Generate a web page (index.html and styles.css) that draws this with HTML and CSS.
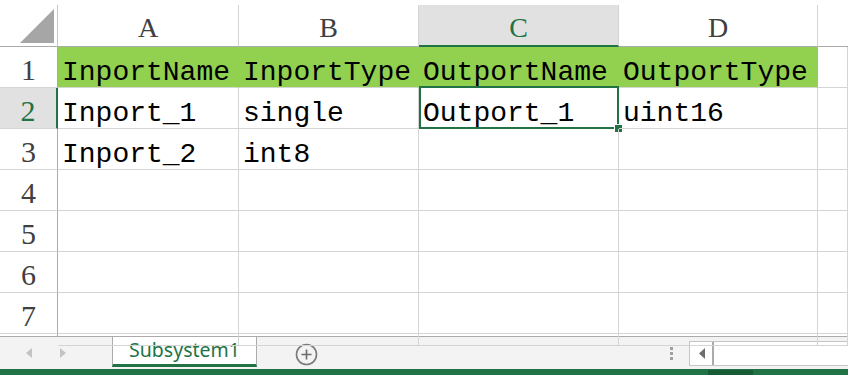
FILE: index.html
```html
<!DOCTYPE html>
<html>
<head>
<meta charset="utf-8">
<link rel="stylesheet" href="styles.css">
</head>
<body>
<div class="app">
  <div class="grid">
    <div class="corner"><svg width="57" height="41" viewBox="0 0 57 41"><polygon points="54,4 54,38 20,38" fill="#a6a6a6"/></svg></div>
    <div class="ch">A</div>
    <div class="ch">B</div>
    <div class="ch ch-sel">C</div>
    <div class="ch">D</div>
    <div class="ch ch-last"></div>

    <div class="rh">1</div>
    <div class="c fill">InportName</div>
    <div class="c fill">InportType</div>
    <div class="c fill">OutportName</div>
    <div class="c fill">OutportType</div>
    <div class="c"></div>

    <div class="rh rh-sel">2</div>
    <div class="c">Inport_1</div>
    <div class="c">single</div>
    <div class="c active">Outport_1<span class="selbox"><span class="handle"></span></span></div>
    <div class="c">uint16</div>
    <div class="c"></div>

    <div class="rh">3</div>
    <div class="c">Inport_2</div>
    <div class="c">int8</div>
    <div class="c"></div>
    <div class="c"></div>
    <div class="c"></div>

    <div class="rh">4</div>
    <div class="c"></div><div class="c"></div><div class="c"></div><div class="c"></div><div class="c"></div>

    <div class="rh">5</div>
    <div class="c"></div><div class="c"></div><div class="c"></div><div class="c"></div><div class="c"></div>

    <div class="rh">6</div>
    <div class="c"></div><div class="c"></div><div class="c"></div><div class="c"></div><div class="c"></div>

    <div class="rh">7</div>
    <div class="c"></div><div class="c"></div><div class="c"></div><div class="c"></div><div class="c"></div>

    <div class="rh rh-part"></div>
    <div class="c c-part"></div><div class="c c-part"></div><div class="c c-part"></div><div class="c c-part"></div><div class="c c-part"></div>
  </div>

  <div class="tabbar">
    <div class="nav">
      <svg class="navarrow" width="6" height="10" viewBox="0 0 6 10"><polygon points="6,0 6,10 0,5" fill="#c3c3c3"/></svg>
      <svg class="navarrow" width="6" height="10" viewBox="0 0 6 10"><polygon points="0,0 0,10 6,5" fill="#c3c3c3"/></svg>
    </div>
    <div class="tab">Subsystem1</div>
    <svg class="add" width="23" height="23" viewBox="0 0 23 23"><circle cx="11.5" cy="11.5" r="10" fill="none" stroke="#7a7a7a" stroke-width="1.6"/><path d="M6.5 11.5h10M11.5 6.5v10" stroke="#6a6a6a" stroke-width="1.6"/></svg>
    <div class="dots"><span></span><span></span><span></span></div>
    <div class="hscroll">
      <div class="sbtn"><svg width="6" height="11" viewBox="0 0 6 11"><polygon points="6,0 6,11 0,5.5" fill="#6e6e6e"/></svg></div>
      <div class="strack"></div>
    </div>
  </div>

  <div class="status"><div class="status-seg"></div></div>
</div>
</body>
</html>
```

FILE: styles.css
```css
* { box-sizing: border-box; }
html, body { margin: 0; padding: 0; background: #fff; }
body { width: 848px; height: 375px; overflow: hidden; }

.app { width: 848px; height: 375px; display: flex; flex-direction: column; overflow: hidden; }

.grid {
  display: grid;
  grid-template-columns: 58px 181px 180px 200px 199px 1fr;
  grid-template-rows: 42px repeat(7, 41px) 2px;
  padding-top: 5px;
  flex: none;
}

.corner {
  border-right: 1px solid #c8c8c8;
  border-bottom: 1px solid #ababab;
}
.corner svg { display: block; }

.ch {
  border-right: 1px solid #d4d4d4;
  border-bottom: 1px solid #ababab;
  font-family: "Liberation Serif", serif;
  font-size: 28px;
  color: #404040;
  text-align: center;
  line-height: 29px;
  padding-top: 8px;
}
.ch-last { border-right: none; }
.ch-sel {
  background: #e1e1e1;
  color: #217346;
  border-bottom: 2px solid #217346;
}

.rh {
  border-right: 1px solid #ababab;
  border-bottom: 1px solid #d4d4d4;
  font-family: "Liberation Serif", serif;
  font-size: 30px;
  color: #404040;
  text-align: center;
  line-height: 29px;
  padding-top: 8px;
}
.rh-sel {
  background: #e1e1e1;
  color: #217346;
  border-right: 2px solid #217346;
}
.rh-part, .c-part { border-bottom: none; padding: 0; }

.c {
  position: relative;
  border-right: 1px solid #d4d4d4;
  border-bottom: 1px solid #d4d4d4;
  font-family: "Liberation Mono", monospace;
  font-size: 28px;
  color: #000;
  line-height: 29px;
  padding: 11px 0 0 4px;
  white-space: nowrap;
}
.fill {
  background: #92d050;
  border-right-color: #92d050;
}

.selbox {
  position: absolute;
  left: 0;
  top: -2px;
  right: -1px;
  bottom: -1px;
  border: 2px solid #217346;
  pointer-events: none;
}
.handle {
  position: absolute;
  right: -5px;
  bottom: -5px;
  width: 7px;
  height: 7px;
  background: #217346;
  box-shadow: 0 0 0 1px #fff;
}

.tabbar {
  flex: none;
  height: 33px;
  background: #f3f3f3;
  border-top: 1px solid #ababab;
  display: flex;
  align-items: flex-start;
}
.nav {
  width: 112px;
  flex: none;
  display: flex;
  align-items: center;
  gap: 28px;
  padding: 11px 0 0 26px;
}
.navarrow { display: block; }

.tab {
  flex: none;
  width: 145px;
  height: 30px;
  background: #fff;
  border-left: 1px solid #ababab;
  border-right: 1px solid #ababab;
  border-bottom: 3px solid #217346;
  font-family: "Noto Sans", sans-serif;
  font-size: 19.5px;
  line-height: 26px;
  color: #217346;
  text-align: center;
}

.add {
  display: block;
  flex: none;
  margin: 6px 0 0 38px;
}

.dots {
  margin-left: auto;
  margin-right: 16px;
  margin-top: 10px;
  display: flex;
  flex-direction: column;
  gap: 2px;
}
.dots span { display: block; width: 3px; height: 3px; background: #a0a0a0; }

.hscroll {
  flex: none;
  width: 159px;
  height: 25px;
  margin-top: 4px;
  display: flex;
  border-top: 1px solid #c6c6c6;
  border-bottom: 1px solid #c6c6c6;
  border-left: 1px solid #c6c6c6;
  background: #fff;
}
.sbtn {
  width: 24px;
  flex: none;
  display: flex;
  align-items: center;
  justify-content: center;
  border-right: 2px solid #ababab;
  background: #fff;
}
.sbtn svg { display: block; margin-left: 1px; }
.strack { flex: 1; background: #fff; }

.status {
  flex: 1;
  background: #217346;
  position: relative;
}
.status-seg {
  margin-left: 708px;
  width: 45px;
  height: 100%;
  margin-top: 1px;
  background: #185c37;
}
```
